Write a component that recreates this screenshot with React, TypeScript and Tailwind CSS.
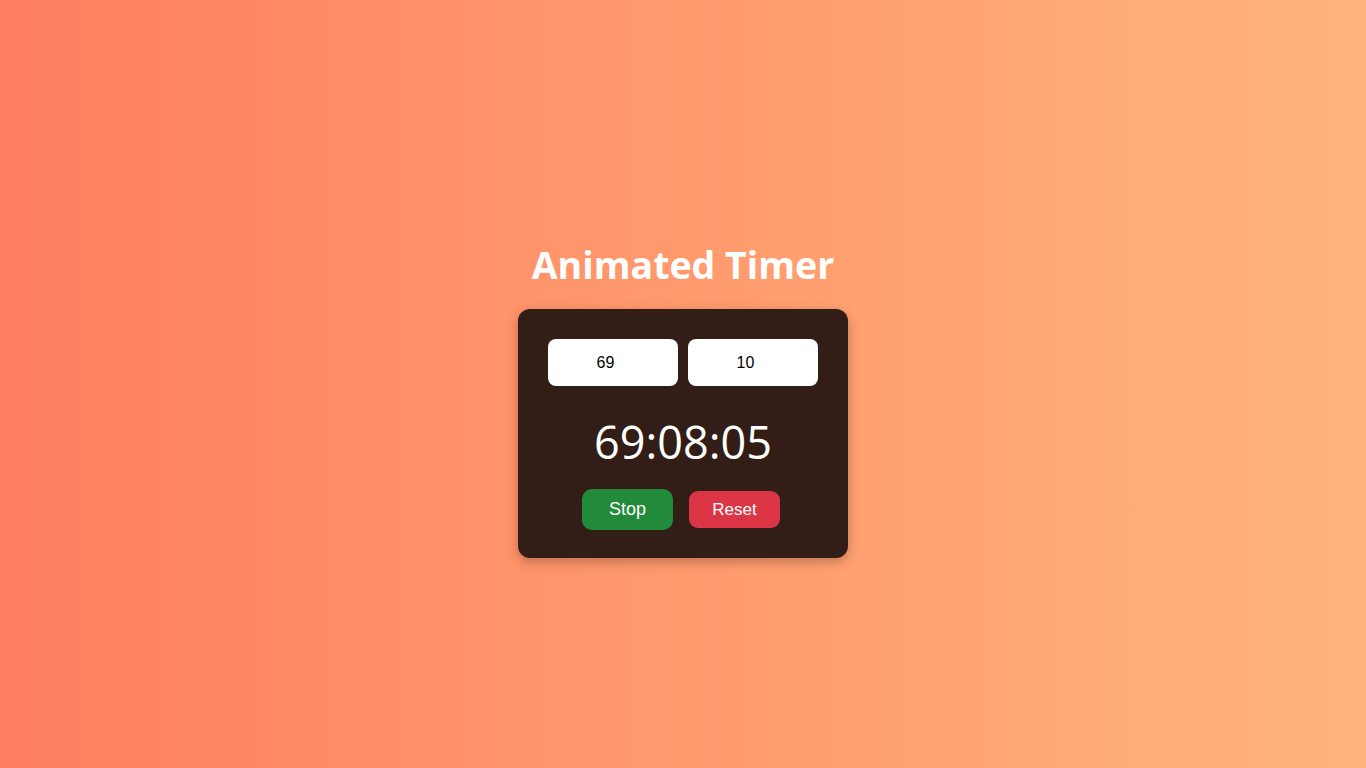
import React, { useState } from 'react';

const App: React.FC = () => {
  const [hours, setHours] = useState('69');
  const [minutes, setMinutes] = useState('10');

  return (
    <div className="min-h-screen w-full flex items-center justify-center bg-gradient-to-r from-[#ff7e5f] to-[#feb47b] pt-[31px]">
      <div className="flex flex-col items-center">
        <h1 className="text-[37.5px] leading-[48px] font-bold text-white mb-[20px] font-['Open_Sans',sans-serif]">
          Animated Timer
        </h1>
        <div className="w-[330px] bg-[#321e17] rounded-[12px] px-[30px] pt-[30px] pb-[28px] shadow-[0_4px_12px_rgba(0,0,0,0.25)] flex flex-col items-center">
          <div className="flex gap-[10px]">
            <input
              type="number"
              value={hours}
              onChange={(e) => setHours(e.target.value)}
              className="w-[130px] h-[47px] rounded-[8px] bg-white text-black text-center text-[16px] outline-none font-['Liberation_Sans',Arial,sans-serif]"
            />
            <input
              type="number"
              value={minutes}
              onChange={(e) => setMinutes(e.target.value)}
              className="w-[130px] h-[47px] rounded-[8px] bg-white text-black text-center text-[16px] outline-none font-['Liberation_Sans',Arial,sans-serif]"
            />
          </div>
          <div className="mt-[28px] text-white text-[45px] leading-[56px] font-['Open_Sans',sans-serif]">
            69:08:05
          </div>
          <div className="mt-[19px] mr-[4px] flex items-center gap-[16px]">
            <button className="w-[91px] h-[41px] rounded-[10px] bg-[#228b3b] text-white text-[18px] font-['Liberation_Sans',Arial,sans-serif]">
              Stop
            </button>
            <button className="w-[91px] h-[37px] rounded-[9px] bg-[#dc3545] text-white text-[17px] font-['Liberation_Sans',Arial,sans-serif]">
              Reset
            </button>
          </div>
        </div>
      </div>
    </div>
  );
};

export default App;
